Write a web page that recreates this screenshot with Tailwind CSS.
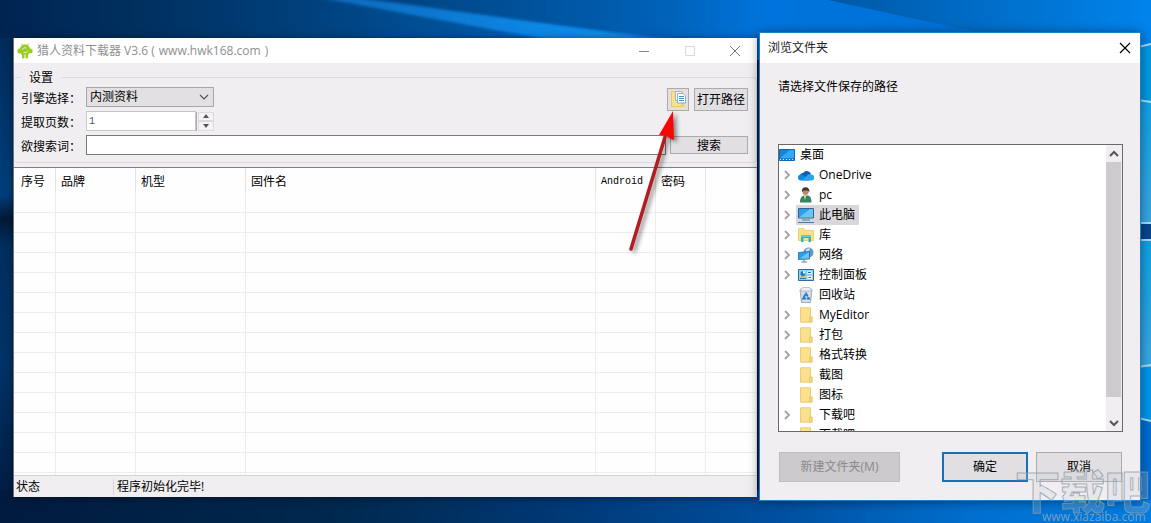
<!DOCTYPE html>
<html lang="zh-CN">
<head>
<meta charset="utf-8">
<title>猎人资料下载器 V3.6</title>
<script src="https://cdn.jsdelivr.net/npm/@tailwindcss/browser@4"></script>
</head>
<body class="relative h-screen overflow-hidden bg-[#00264f] font-['Open_Sans','Noto_Sans_CJK_SC',sans-serif] text-xs text-black">

<!-- Desktop wallpaper -->
<svg class="absolute inset-0 h-full w-full" viewBox="0 0 1151 523" preserveAspectRatio="none" aria-hidden="true">
  <defs>
    <linearGradient id="top" x1="0" x2="1"><stop offset="0" stop-color="#002452"/><stop offset=".12" stop-color="#00305f"/><stop offset=".28" stop-color="#00427f"/><stop offset=".45" stop-color="#005aa8"/><stop offset=".6" stop-color="#0070d0"/><stop offset=".75" stop-color="#0070d6"/><stop offset="1" stop-color="#0086ee"/></linearGradient>
    <linearGradient id="shade" x1="0" x2="1"><stop offset="0" stop-color="#003c74"/><stop offset=".5" stop-color="#0062b8"/><stop offset=".65" stop-color="#0074dc"/><stop offset="1" stop-color="#0070d6"/></linearGradient>
    <linearGradient id="shade2" x1="0" x2="1"><stop offset="0" stop-color="#0058a6"/><stop offset="1" stop-color="#0084ec"/></linearGradient>
    <linearGradient id="ray" x1="0" x2="1"><stop offset="0" stop-color="#0a66b8"/><stop offset=".6" stop-color="#0e86e4"/><stop offset="1" stop-color="#1296f2"/></linearGradient>
    <linearGradient id="left" x1="0" x2="0" y1="0" y2="1"><stop offset="0" stop-color="#002c5a"/><stop offset=".34" stop-color="#003f7c"/><stop offset=".39" stop-color="#001a36"/><stop offset=".45" stop-color="#002f60"/><stop offset=".7" stop-color="#003468"/><stop offset="1" stop-color="#001c42"/></linearGradient>
    <linearGradient id="bottom" x1="0" x2="1"><stop offset="0" stop-color="#001b3e"/><stop offset=".3" stop-color="#00294f"/><stop offset=".5" stop-color="#003a78"/><stop offset=".68" stop-color="#0050a0"/><stop offset=".85" stop-color="#0070d0"/><stop offset="1" stop-color="#007ce0"/></linearGradient>
    <linearGradient id="pane" x1="0" x2="0" y1="0" y2="1"><stop offset="0" stop-color="#0fa0e4"/><stop offset="1" stop-color="#3aa6e2"/></linearGradient>
    <filter id="soft" x="-5%" y="-20%" width="110%" height="140%"><feGaussianBlur stdDeviation="1.500"/></filter>
  </defs>
  <path fill="url(#top)" d="M0 0H1151V60H0z"/>
  <path fill="url(#shade)" d="M335 0H850L1000 40H690z"/>
  <path fill="url(#ray)" d="M310 -4H345L680 42H560z" filter="url(#soft)"/>
  <path fill="url(#shade2)" d="M828 0H1151V46H1040z"/>
  <path fill="url(#left)" d="M0 38H20V500H0z"/>
  <path fill="url(#bottom)" d="M0 490H1151V523H0z"/>
  <path fill="#0098e0" d="M1135 46H1151V100H1135z"/>
  <path fill="url(#pane)" d="M1135 100H1151V223H1135z"/>
  <path fill="#07478f" d="M1135 223H1151V240H1135z"/>
  <path fill="url(#pane)" d="M1135 240H1151V367H1135z"/>
  <path fill="#0094ea" d="M1135 367H1151V420H1135z"/>
  <path fill="#006cd0" d="M1135 420H1151V500H1135z"/>
  <path fill="none" stroke="#a5dcf5" stroke-width="2" d="M1138 47L1151 44M1138 100L1151 102M1138 223H1151M1138 240H1151M1138 367L1151 365M1138 418L1151 421"/>
</svg>

<!-- Downloader window -->
<main class="absolute top-[38px] right-[394px] bottom-[26px] left-[13px] flex flex-col border-l border-gray-500 bg-[#f0eef1] shadow-[0_1px_8px_rgba(0,0,0,0.5)]">
  <header class="flex h-[25px] shrink-0 items-center bg-white pl-[3px] text-[#8f8f8f]">
    <svg class="h-4 w-4" viewBox="0 0 16 16" aria-hidden="true"><g fill="#9bcb2a"><path d="M3 6.500C3 3.500 5 1.500 8 1.500s5 2 5 5z"/><path d="M4 6H12V11.500H4z"/><rect x="0.500" y="5.500" width="4" height="5" rx="1.800"/><rect x="11.500" y="5.500" width="4" height="5" rx="1.800"/><rect x="5" y="10.500" width="2.500" height="5" rx="1"/><rect x="8.500" y="10.500" width="2.500" height="5" rx="1"/></g><path stroke="#9bcb2a" d="M4.500 .8L6 3M11.500 .8L10 3"/><path fill="none" stroke="#e6f3b4" d="M5 7Q6.500 3.500 9.500 5M11 7.500Q9.500 11 6.500 9.500"/></svg>
    <h1 class="ml-1 grow text-xs">猎人资料下载器 V3.6 (<span class="px-1">www.hwk168.com</span>)</h1>
    <button aria-label="最小化" class="flex w-[46px] justify-center"><svg class="h-3 w-3" viewBox="0 0 12 12"><path stroke="#888" d="M1 6.500H11"/></svg></button>
    <button aria-label="最大化" disabled class="flex w-[45px] justify-center"><svg class="h-3 w-3" viewBox="0 0 12 12"><path fill="none" stroke="#dadada" d="M1.500 1.500H10.500V10.500H1.500z"/></svg></button>
    <button aria-label="关闭" class="flex w-[45px] justify-center"><svg class="h-3 w-3" viewBox="0 0 12 12"><path stroke="#777" d="M1 1L11 11M11 1L1 11"/></svg></button>
  </header>

  <form class="shrink-0 pt-[7px] pb-1">
    <fieldset class="rounded-sm border-y border-r border-[#dcdadd]">
      <legend class="ml-[7px] h-[14px] px-2 leading-4">设置</legend>
      <div class="flex flex-col gap-1 pt-[3px] pr-2 pb-[7px] pl-[7px]">
        <div class="flex h-5 items-center">
          <label for="engine" class="w-[65px] pt-1">引擎选择：</label>
          <div class="relative">
            <select id="engine" class="block h-5 w-32 appearance-none border border-[#a8a6a9] bg-[#e2e0e3] pl-[3px] leading-[18px]"><option>内测资料</option></select>
            <svg class="pointer-events-none absolute top-1.5 right-1 h-2 w-3" viewBox="0 0 12 8" aria-hidden="true"><path fill="none" stroke="#555" stroke-width="1.200" d="M2 2L6 6L10 2"/></svg>
          </div>
          <div class="mt-1 ml-auto flex gap-[5px]">
            <button type="button" aria-label="选择路径" class="flex h-[23px] w-[22px] items-center justify-center border border-[#acaaad] bg-[#e1dfe2]">
              <svg class="h-[18px] w-4" viewBox="0 0 16 18" aria-hidden="true"><path fill="#fbe08a" stroke="#e8c868" d="M1.500 1.500H12.500V16.500H1.500z"/><path fill="#f2d070" d="M11 11H14V17H11z"/><path fill="#fff" stroke="#92a0b0" stroke-width=".8" d="M5.500 1.500H11L12.500 3V10.500H5.500z"/><path fill="#fff" stroke="#7f95ae" stroke-width=".8" d="M7.500 3.500H13L15.500 6V13H7.500z"/><path stroke="#4c8fc8" d="M9 6.500H14M9 8.500H14M9 10.500H14"/></svg>
            </button>
            <button type="button" class="h-[23px] w-[54px] border border-[#acaaad] bg-[#e1dfe2] pt-0.5 whitespace-nowrap">打开路径</button>
          </div>
        </div>
        <div class="flex h-5 items-center">
          <label for="pages" class="w-[65px] pt-1">提取页数：</label>
          <input id="pages" type="text" value="1" class="h-5 w-[110px] border border-[#c9c7ca] bg-white px-0.5 font-['Liberation_Mono',monospace] text-[10px] text-gray-600">
          <div class="flex h-[19px] w-[18px] flex-col border-l border-[#aaa8ab] bg-[#f4f2f5] pl-px">
            <button type="button" aria-label="增加" class="flex grow items-center justify-center border border-[#dcdadd]"><svg class="h-1 w-1.5" viewBox="0 0 6 4"><path fill="#555" d="M0 4L3 0L6 4z"/></svg></button>
            <button type="button" aria-label="减少" class="flex grow items-center justify-center border border-[#dcdadd]"><svg class="h-1 w-1.5" viewBox="0 0 6 4"><path fill="#555" d="M0 0L3 4L6 0z"/></svg></button>
          </div>
        </div>
        <div class="flex h-5 items-center">
          <label for="query" class="w-[65px] pt-1">欲搜索词：</label>
          <input id="query" type="text" class="h-5 min-w-0 grow border border-[#7a787b] bg-white px-1">
          <button type="submit" class="ml-1 h-[18px] w-[78px] border border-[#acaaad] bg-[#e1dfe2] pt-px leading-4">搜索</button>
        </div>
      </div>
    </fieldset>
  </form>

  <section class="min-h-0 grow overflow-hidden border-y border-t-[#7d7f84] border-b-[#d5d3d6] bg-[#fefefe]">
    <table class="w-full table-fixed border-separate border-spacing-0 [&_td]:h-5 [&_td]:border-r [&_td]:border-b [&_td]:border-[#ededf0] [&_th]:h-[25px] [&_th]:border-r [&_th]:border-[#e4e4e6] [&_th]:p-0 [&_th]:pt-0.5 [&_th]:pl-[5px] [&_th]:text-left [&_th]:font-normal [&_th]:whitespace-nowrap">
      <colgroup><col class="w-[42px]"><col class="w-20"><col class="w-[110px]"><col><col class="w-[60px]"><col class="w-[50px]"><col class="w-[51px]"></colgroup>
      <thead><tr><th><span class="pl-0.5">序号</span></th><th>品牌</th><th>机型</th><th>固件名</th><th class="font-['Liberation_Mono',monospace] text-[10px]">Android</th><th>密码</th><th aria-label="其他"></th></tr></thead>
      <tbody>
        <tr><td></td><td></td><td></td><td></td><td></td><td></td><td></td></tr>
        <tr><td></td><td></td><td></td><td></td><td></td><td></td><td></td></tr>
        <tr><td></td><td></td><td></td><td></td><td></td><td></td><td></td></tr>
        <tr><td></td><td></td><td></td><td></td><td></td><td></td><td></td></tr>
        <tr><td></td><td></td><td></td><td></td><td></td><td></td><td></td></tr>
        <tr><td></td><td></td><td></td><td></td><td></td><td></td><td></td></tr>
        <tr><td></td><td></td><td></td><td></td><td></td><td></td><td></td></tr>
        <tr><td></td><td></td><td></td><td></td><td></td><td></td><td></td></tr>
        <tr><td></td><td></td><td></td><td></td><td></td><td></td><td></td></tr>
        <tr><td></td><td></td><td></td><td></td><td></td><td></td><td></td></tr>
        <tr><td></td><td></td><td></td><td></td><td></td><td></td><td></td></tr>
        <tr><td></td><td></td><td></td><td></td><td></td><td></td><td></td></tr>
        <tr><td></td><td></td><td></td><td></td><td></td><td></td><td></td></tr>
        <tr><td></td><td></td><td></td><td></td><td></td><td></td><td></td></tr>
        <tr><td></td><td></td><td></td><td></td><td></td><td></td><td></td></tr>
      </tbody>
    </table>
  </section>

  <footer class="flex h-[21px] shrink-0 items-center">
    <span class="w-[100px] border-r border-[#d8d6d9] pl-0.5">状态</span>
    <span class="pl-[3px]">程序初始化完毕!</span>
  </footer>
</main>

<!-- Arrow pointing at the folder button -->
<svg class="absolute top-[105px] right-[461px] h-[155px] w-[70px] drop-shadow-[3px_2px_2px_rgba(0,0,0,0.45)]" viewBox="0 0 70 155" aria-hidden="true">
  <path stroke="#b51c20" stroke-width="3.500" stroke-linecap="round" d="M11 144L45 32"/>
  <path fill="#fa0505" d="M53 6L39 30L45 30L51 34L54 35z"/>
</svg>

<!-- Folder picker -->
<div role="dialog" aria-labelledby="picker-title" class="absolute top-8 right-2.5 bottom-[22px] flex w-[382px] flex-col border border-[#1b7fc4] bg-[#f0eef1] shadow-[0_1px_10px_rgba(0,0,0,0.45)]">
  <header class="flex h-[30px] shrink-0 items-center justify-between bg-white pr-[7px] pl-2">
    <h2 id="picker-title" class="text-xs text-[#222]">浏览文件夹</h2>
    <button aria-label="关闭" class="flex h-5 w-4 items-center justify-center"><svg class="h-3 w-3" viewBox="0 0 12 12"><path stroke="#000" stroke-width="1.200" d="M1 1L11 11M11 1L1 11"/></svg></button>
  </header>
  <p class="shrink-0 px-[18px] pt-[15px] pb-12 leading-[18px]">请选择文件保存的路径</p>

  <div class="mr-[17px] ml-[18px] flex min-h-0 grow border border-[#696969] bg-white">
    <ul class="min-w-0 grow overflow-hidden [&>li]:flex [&>li]:h-5 [&>li]:items-center [&>li]:gap-[3px] [&>li]:leading-[18px]">
      <li><svg class="h-4 w-4" viewBox="0 0 16 16"><path fill="#1683d8" stroke="#0f68b4" d="M.5 2.500H15.500V13.500H.5z"/><path fill="#35a8f5" d="M1 11L11 3H15V11z"/><path stroke="#d8eefc" stroke-dasharray="1 2" d="M1 12.500H15"/></svg><span class="ml-0.5">桌面</span></li>
      <li><svg class="h-4 w-4" viewBox="0 0 16 16"><use href="#chev"/></svg><svg class="h-4 w-4" viewBox="0 0 16 16"><path fill="#0f5fb8" d="M2 9A3 3 0 0 1 5 6A4.500 4.500 0 0 1 13 7L8 11z"/><path fill="#1587dc" d="M0 10.500A3 3 0 0 1 4 7.500L12 13.500H3A3 3 0 0 1 0 10.500z"/><path fill="#2ba3ee" d="M4 13.500L9 8.500A4 4 0 0 1 13 7.500A3 3 0 0 1 13.500 13.500z"/></svg><span class="pl-0.5">OneDrive</span></li>
      <li><svg class="h-4 w-4" viewBox="0 0 16 16"><use href="#chev"/></svg><svg class="h-4 w-4" viewBox="0 0 16 16"><path fill="#35845a" d="M2 15.500Q2 9 6 8.500H10Q13.500 9 13.500 15.500z"/><path fill="#e8f2e8" d="M6 8.500H8L7 13z"/><circle cx="7.500" cy="5" r="3" fill="#b98b6c"/><path fill="#40342e" d="M4 5Q3.500 .3 7.500 .3T11.500 5L9.500 3.500H6z"/></svg><span class="pl-0.5">pc</span></li>
      <li><svg class="h-4 w-4" viewBox="0 0 16 16"><use href="#chev"/></svg><span class="-ml-0.5 flex h-5 items-center gap-[3px] bg-[#d9d7da] pr-1 pl-0.5"><svg class="h-4 w-4" viewBox="0 0 16 16"><path fill="#2b9fee" stroke="#33658c" d="M.5 1.500H15.500V11H.5z"/><path fill="#6cc3fa" d="M1 10.500L12 2H15V10.500z"/><path stroke="#467ca4" d="M4 13H12M0 15.500H16"/></svg><span class="pl-0.5">此电脑</span></span></li>
      <li><svg class="h-4 w-4" viewBox="0 0 16 16"><use href="#chev"/></svg><svg class="h-4 w-4" viewBox="0 0 16 16"><path fill="#fbdf84" stroke="#e5c560" stroke-width=".7" d="M.5 1.500H6L7 3.500H15.500V13.500H.5z"/><path fill="#2bb4c4" d="M3 8H13V15H10.500V11H5.500V15H3z"/><path fill="#58d1d8" d="M3 8H13V10H3z"/></svg><span class="pl-0.5">库</span></li>
      <li><svg class="h-4 w-4" viewBox="0 0 16 16"><use href="#chev"/></svg><svg class="h-4 w-4" viewBox="0 0 16 16"><circle cx="10.500" cy="5.500" r="5" fill="#5a9cc8"/><path fill="#c4dfee" d="M8 2L12 1L11 5L8 5z"/><path fill="#2b9fee" stroke="#246793" stroke-width=".8" d="M.5 5.500L11.500 4.500V12L.5 12.500z"/><path fill="#6fc5f9" d="M2 11.500L10 5.500H11V11.500z"/><path stroke="#467ca4" d="M6 12.500V14.500M3.500 15H9"/></svg><span class="pl-0.5">网络</span></li>
      <li><svg class="h-4 w-4" viewBox="0 0 16 16"><use href="#chev"/></svg><svg class="h-4 w-4" viewBox="0 0 16 16"><path fill="#8fd2f6" stroke="#2d6e9d" d="M.5 2.500H15.500V13.500H.5z"/><circle cx="5" cy="6.500" r="2.500" fill="#1b78b8"/><path fill="#fff" d="M5 6.500V4A2.500 2.500 0 0 1 7.500 6.500z"/><path fill="#f0f9ff" d="M9.500 4.500H14V7H9.500zM9.500 9H14V12H9.500z"/><path stroke="#2271a8" d="M10 5.500H13M2 11.500H8M10.500 10.500H13"/><path stroke="#e2a62c" d="M3 9.500H6"/></svg><span class="pl-0.5">控制面板</span></li>
      <li><svg class="ml-[19px] h-4 w-4" viewBox="0 0 16 16"><path fill="#d3dde6" stroke="#8b9aa8" stroke-width=".8" d="M2 2.500H14L12.500 15.500H3.500z"/><path fill="#f0f2f4" stroke="#a9b2ba" stroke-width=".8" d="M2 2.500L5 .5H11L14 2.500L11 4H4z"/><path fill="none" stroke="#2478c0" stroke-width="1.800" stroke-dasharray="3.500 .8" d="M8 6.500L11 11.500H5z"/></svg><span class="pl-0.5">回收站</span></li>
      <li><svg class="h-4 w-4" viewBox="0 0 16 16"><use href="#chev"/></svg><svg class="h-4 w-4" viewBox="0 0 16 16"><use href="#folder"/></svg><span class="pl-0.5">MyEditor</span></li>
      <li><svg class="h-4 w-4" viewBox="0 0 16 16"><use href="#chev"/></svg><svg class="h-4 w-4" viewBox="0 0 16 16"><use href="#folder"/></svg><span class="pl-0.5">打包</span></li>
      <li><svg class="h-4 w-4" viewBox="0 0 16 16"><use href="#chev"/></svg><svg class="h-4 w-4" viewBox="0 0 16 16"><use href="#folder"/></svg><span class="pl-0.5">格式转换</span></li>
      <li><svg class="ml-[19px] h-4 w-4" viewBox="0 0 16 16"><use href="#folder"/></svg><span class="pl-0.5">截图</span></li>
      <li><svg class="ml-[19px] h-4 w-4" viewBox="0 0 16 16"><use href="#folder"/></svg><span class="pl-0.5">图标</span></li>
      <li><svg class="h-4 w-4" viewBox="0 0 16 16"><use href="#chev"/></svg><svg class="h-4 w-4" viewBox="0 0 16 16"><use href="#folder"/></svg><span class="pl-0.5">下载吧</span></li>
      <li><svg class="ml-[19px] h-4 w-4" viewBox="0 0 16 16"><use href="#folder"/></svg><span class="pl-0.5">下载吧</span></li>
    </ul>
    <div class="flex w-4 shrink-0 flex-col bg-[#f0eef1]">
      <button aria-label="向上滚动" class="flex h-[17px] w-[15px] shrink-0 items-center justify-center"><svg class="h-2 w-2.5" viewBox="0 0 10 8"><path fill="none" stroke="#555" stroke-width="2" d="M1 6L5 2L9 6"/></svg></button>
      <div class="mb-[17px] w-[15px] grow bg-[#cdcbce]"></div>
      <button aria-label="向下滚动" class="flex h-[17px] w-[15px] shrink-0 items-center justify-center"><svg class="h-2 w-2.5" viewBox="0 0 10 8"><path fill="none" stroke="#555" stroke-width="2" d="M1 2L5 6L9 2"/></svg></button>
    </div>
  </div>

  <footer class="flex shrink-0 gap-2 pt-5 pr-[18px] pb-[18px] pl-[19px]">
    <button disabled class="mr-auto h-[30px] w-[121px] border border-[#bfbdc0] bg-[#cccacd] text-[#8b898c]">新建文件夹(M)</button>
    <button class="h-[30px] w-[86px] border-2 border-[#1473b8] bg-[#e1dfe2]">确定</button>
    <button class="h-[30px] w-[86px] border border-[#acaaad] bg-[#e1dfe2]">取消</button>
  </footer>
</div>

<!-- Site watermark -->
<svg class="absolute right-0 bottom-0 h-[60px] w-[140px] font-['Noto_Sans_CJK_SC',sans-serif]" viewBox="0 0 140 60">
  <text x="4" y="46" font-size="45" font-weight="900" fill="#c8ccd2" fill-opacity=".22" stroke="#8e98a4" stroke-opacity=".75" stroke-width="1">下载吧</text>
  <text x="31" y="58" font-size="12" fill="#8fa6c0" fill-opacity=".85" class="font-['Open_Sans',sans-serif]">www.xiazaiba.com</text>
</svg>

<!-- Shared tree symbols -->
<svg class="hidden" aria-hidden="true">
  <symbol id="chev" viewBox="0 0 16 16"><path fill="none" stroke="#a3a3a3" stroke-width="1.800" d="M6 4L10 8L6 12"/></symbol>
  <symbol id="folder" viewBox="0 0 16 16"><path fill="#fbe18d" stroke="#ebce74" d="M2.500 .8H12.500V15.200H2.500z"/><path fill="#f6d97d" stroke="#e2c263" stroke-width=".8" d="M11.500 10H14.200V15.200H11.500z"/></symbol>
</svg>
</body>
</html>
